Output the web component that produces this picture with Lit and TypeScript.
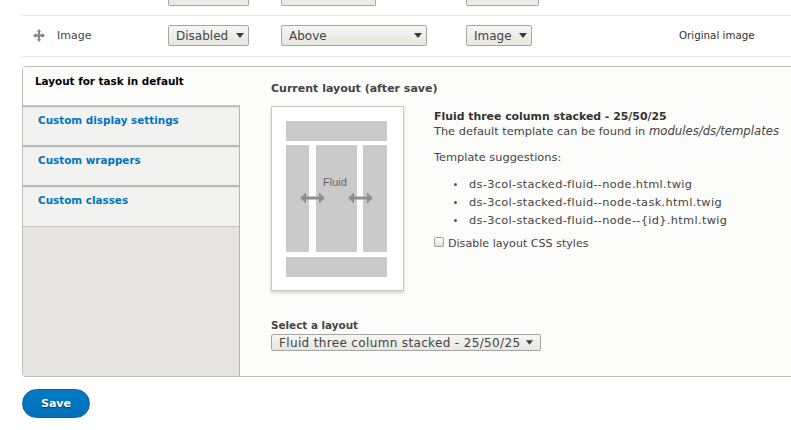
import { LitElement, html, css, svg } from "lit";
import { customElement } from "lit/decorators.js";

const caret = html`<svg class="caret" width="8" height="5" viewBox="0 0 8 5"><path d="M0 0h8L4 5z" fill="#3a3a3a"/></svg>`;

@customElement("app-root")
export class AppRoot extends LitElement {
  static styles = css`
    :host { display: block; width: 791px; height: 430px; overflow: hidden; background: #fff; color: #444;
      font-family: "DejaVu Sans", Verdana, sans-serif; font-size: 11.35px; }
    * { box-sizing: border-box; }
    .wrap { padding-left: 22px; }
    .row { display: grid; grid-template-columns: 146px 113px 185px 213px 1fr; border-bottom: 1px solid #e6e6e4; }
    .stub { height: 16px; align-items: start; }
    .stubbox { height: 6px; border: 1px solid #a6a6a6; border-top: 0; border-radius: 0 0 2px 2px; background: #ecece6; }
    .w95 { width: 95px; }
    .w81 { width: 81px; }
    .w73 { width: 73px; }
    .w146 { width: 146px; }
    .w66 { width: 66px; }
    .main { height: 41px; align-items: center; padding-bottom: 2px; }
    .cell-name { display: flex; align-items: center; padding-left: 11px; gap: 12px; font-size: 11px; }
    .sel { display: flex; align-items: center; justify-content: space-between; height: 21px; border: 1px solid #a6a6a6; border-radius: 2px;
      background: linear-gradient(#f6f6f3, #e7e7df); padding: 1px 4px 0 7px; font-size: 12px; color: #444; white-space: nowrap; }
    .orig { font-size: 10.3px; color: #333; }
    .panel { margin-top: 9px; display: flex; height: 311px; border: 1px solid #bfbfbf; border-right: 0; border-radius: 4px 0 0 4px; background: #fcfcfa; }
    .tabs { width: 217px; flex: none; background: #e6e5e1; border-right: 1px solid #b4b4b4; display: flex; flex-direction: column; }
    .tab { background: #f2f2f0; border-bottom: 2px solid #b8b8b8; border-top: 1px solid #e2e2e0; height: 40px; padding: 6px 0 0 15px;
      font-weight: 700; font-size: 10.4px; color: #0074bd; }
    .tab.active { background: #fcfcfa; color: #000; padding: 8px 0 0 12px; margin-right: -1px; border-top: 0; border-bottom: 2px solid #c0c0c0; position: relative; }
    .tab:last-child { border-bottom: 1px solid #c8c8c8; }
    .content { flex: 1; padding: 15px 0 0 31px; min-width: 0; }
    h3 { margin: 0; font-size: 11px; font-weight: 700; color: #444; line-height: 14px; }
    h3.small { font-size: 10.4px; }
    .cols { display: flex; margin-top: 10px; }
    .thumb { position: relative; width: 133px; height: 185px; flex: none; background: #fff; border: 1px solid #c8c8c8; box-shadow: 0 2px 3px rgba(0,0,0,.16);
      padding: 14px 16px 0 14px; display: flex; flex-direction: column; gap: 4px; }
    .blk { background: #cacaca; height: 20px; flex: none; }
    .mid { display: grid; grid-template-columns: 23px 41px 24px; justify-content: space-between; height: 107px; flex: none; margin-bottom: 1px; }
    .mid .blk { height: 107px; }
    .fluid { position: absolute; left: 51px; top: 69px; font: 11px "Liberation Sans", Arial, sans-serif; color: #666; }
    .arrows { position: absolute; left: 28px; top: 85px; }
    .info { margin-left: 30px; padding-top: 3px; line-height: 15px; white-space: nowrap; }
    .info b { display: block; color: #333; font-size: 10.9px; }
    .info i { font-size: 11.7px; }
    .info p { margin: 11px 0 0; }
    ul { list-style: none; margin: 10px 0 0; padding: 0 0 0 35px; }
    li { height: 18px; line-height: 18px; position: relative; letter-spacing: 0.33px; }
    li::before { content: ""; position: absolute; left: -15px; top: 8px; width: 3px; height: 3px; border-radius: 50%; background: #555; }
    .chk { display: flex; align-items: center; gap: 4px; margin-top: 7px; height: 15px; font-size: 11.1px; }
    .box { width: 10px; height: 10px; margin-top: -3px; border: 1px solid #a0a0a0; border-radius: 2px; background: linear-gradient(#fff, #e0e0e0); flex: none; }
    .sl { margin-top: 27px; }
    .sl .sel { width: 270px; height: 17px; margin-top: 2px; padding: 0 7px 0 7px; letter-spacing: 0.35px; }
    .sl .caret { width: 7px; height: 5px; }
    .save { display: flex; align-items: center; justify-content: center; margin-top: 12px; width: 68px; height: 29px; border-radius: 15px; background: linear-gradient(#007bc6, #0071b8); border: 1px solid #1e5c90;
      color: #fff; font-weight: 700; font-size: 11px; text-shadow: 0 1px 1px #0a3a60; }
  `;

  render() {
    const arrow = (x: number) => svg`<path transform="translate(${x} 0)" d="M0 6l6-5.500v4h13v-4l6 5.500-6 5.500v-4H6v4z" fill="#8e8e8e"/>`;
    return html`
      <div class="wrap">
        <div class="row stub">
          <div></div>
          <div class="stubbox w81"></div>
          <div class="stubbox w95"></div>
          <div class="stubbox w73"></div>
        </div>
        <div class="row main">
          <div class="cell-name">
            <svg width="12" height="13" viewBox="0 0 12 13"><path d="M6 0l2.300 2.800H7V5.200h2.200V3.900L12 6.500 9.200 9.100V7.800H7v2.400h1.300L6 13l-2.300-2.800H5V7.800H2.800v1.300L0 6.500l2.800-2.600v1.300H5V2.800H3.700z" fill="#888"/></svg>
            <span>Image</span>
          </div>
          <div class="sel w81"><span>Disabled</span>${caret}</div>
          <div class="sel w146"><span>Above</span>${caret}</div>
          <div class="sel w66"><span>Image</span>${caret}</div>
          <div class="orig">Original image</div>
        </div>
        <div class="panel">
          <div class="tabs">
            <div class="tab active">Layout for task in default</div>
            <div class="tab">Custom display settings</div>
            <div class="tab">Custom wrappers</div>
            <div class="tab">Custom classes</div>
          </div>
          <div class="content">
            <h3>Current layout (after save)</h3>
            <div class="cols">
              <div class="thumb">
                <div class="blk"></div>
                <div class="mid"><div class="blk"></div><div class="blk"></div><div class="blk"></div></div>
                <div class="blk"></div>
                <span class="fluid">Fluid</span>
                <svg class="arrows" width="73" height="12" viewBox="0 0 73 12">${arrow(0)}${arrow(48)}</svg>
              </div>
              <div class="info">
                <b>Fluid three column stacked - 25/50/25</b>
                <div>The default template can be found in <i>modules/ds/templates</i></div>
                <p>Template suggestions:</p>
                <ul>
                  <li>ds-3col-stacked-fluid--node.html.twig</li>
                  <li>ds-3col-stacked-fluid--node-task.html.twig</li>
                  <li>ds-3col-stacked-fluid--node--{id}.html.twig</li>
                </ul>
                <div class="chk"><span class="box"></span><span>Disable layout CSS styles</span></div>
              </div>
            </div>
            <div class="sl">
              <h3 class="small">Select a layout</h3>
              <div class="sel"><span>Fluid three column stacked - 25/50/25</span>${caret}</div>
            </div>
          </div>
        </div>
        <div class="save">Save</div>
      </div>
    `;
  }
}
